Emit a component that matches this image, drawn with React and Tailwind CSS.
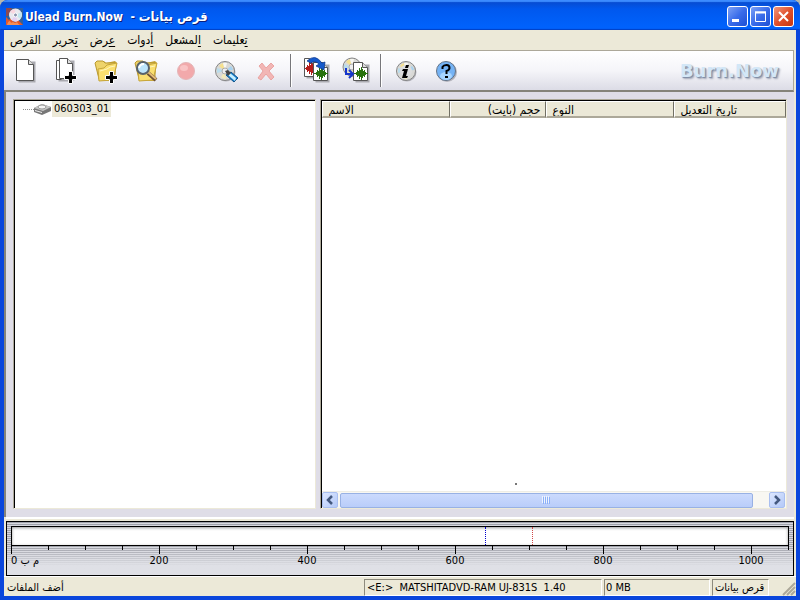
import React from "react";

const menus = [
  ["", "القرص"],
  ["ت", "حرير"],
  ["ع", "رض"],
  ["أ", "دوات"],
  ["ا", "لمشعل"],
  ["ت", "عليمات"],
];

function Plus() {
  return (
    <path d="M18.500 12.500h4v4h4v4h-4v4h-4v-4h-4v-4h4z" fill="#000" stroke="#fff" strokeWidth="1" />
  );
}

function Disc({ cx = 15, cy = 15, r = 10 }) {
  return (
    <g>
      <circle cx={cx + 1} cy={cy + 1} r={r} fill="#b4b4bc" />
      <circle cx={cx} cy={cy} r={r} fill="#d9d9d6" stroke="#858585" />
      <path d={`M${cx} ${cy}l-6 -5a8 8 0 0 1 4 -3z`} fill="#f5e08f" />
      <path d={`M${cx} ${cy}l-2 -8h4z`} fill="#f7f7f2" />
      <path d={`M${cx} ${cy}l-8 2v-5z`} fill="#b9dcec" />
      <path d={`M${cx} ${cy}l6 -5a8 8 0 0 1 2 4z`} fill="#a8d2ef" />
      <path d={`M${cx} ${cy}l-4 6a8 8 0 0 0 5 2z`} fill="#f3eab8" />
      <circle cx={cx} cy={cy} r="3" fill="#eee" stroke="#aaa" />
    </g>
  );
}

const waveHeights = [0, 0, 1, 3, 2, 5, 3, 6, 4, 2, 3, 1, 0, 0];

function Wave({ x, y, color, from = 0, to = 14 }) {
  return (
    <g fill={color} shapeRendering="crispEdges">
      {waveHeights.slice(from, to).map((h, i) => (
        <rect key={i} x={x + i} y={y - h} width="1" height={h * 2 + 1} />
      ))}
    </g>
  );
}

function Page({ x, y, w, h }) {
  return (
    <g>
      <path d={`M${x + 2} ${y + 2}h${w}v${h}h-${w}z`} fill="#aaaab0" />
      <path d={`M${x} ${y}h${w - 5}l5 5v${h - 5}h-${w}z`} fill="#fff" stroke="#555" />
      <path d={`M${x + w - 5} ${y}v5h5`} fill="#ddd" stroke="#555" />
    </g>
  );
}

function Folder() {
  return (
    <g>
      <path d="M5 7l2-2h6l2 2 9-2 2 2-3 18H8z" fill="#c6a337" />
      <path d="M4 7l2-2h6l2 2h10v16H8z" fill="#eed36a" stroke="#b9992f" />
      <path d="M7 13l6-1 3-3 10-2-4 17-14 1z" fill="#fadf70" stroke="#c7a63a" />
      <path d="M9 15l7-2 3-2 5-1" stroke="#fff6bd" fill="none" />
    </g>
  );
}

const icons = {
  new: <Page x={5.5} y={3.5} w={17} h={21} />,
  addFile: (
    <g>
      <Page x={5.5} y={4.5} w={13} h={19} />
      <Page x={8.5} y={2.5} w={13} h={20} />
      <g transform="translate(-1 3)"><Plus /></g>
    </g>
  ),
  addFolder: (
    <g>
      <Folder />
      <g transform="translate(0 3)"><Plus /></g>
    </g>
  ),
  search: (
    <g>
      <Folder />
      <path d="M17 17l8 7" stroke="#6e5134" strokeWidth="4" />
      <path d="M17 16l8 7" stroke="#e4bc78" strokeWidth="2" />
      <circle cx="12" cy="12" r="6" fill="#bde5fb" stroke="#58626c" strokeWidth="2" />
      <path d="M8 12q1-4 5-4" stroke="#fff" fill="none" strokeWidth="2" />
    </g>
  ),
  record: (
    <g>
      <circle cx="15" cy="15" r="8.500" fill="#f2a9ab" stroke="#e4b6b8" />
      <ellipse cx="13" cy="12" rx="4" ry="3" fill="#f9c4c5" />
    </g>
  ),
  erase: (
    <g>
      <Disc cx={14} cy={15} r={9.5} />
      <path d="M15 19l5-3 7 6-4 4z" fill="#1681cf" stroke="#135389" />
      <path d="M19 17l6 5-1 3-7-6z" fill="#c8efff" />
      <path d="M14 15l3-1 3 3-3 3z" fill="#444" />
    </g>
  ),
  delete: (
    <path d="M8 10l3-3 4 5 5-5 3 3-5 5 5 6-3 3-5-6-5 6-3-2 5-7z" fill="#f2b6b5" stroke="#e79896" strokeWidth=".8" />
  ),
  convert: (
    <g>
      <Page x={3.5} y={2.5} w={10} h={18} />
      <Wave x={4} y={12} color="#b51c1c" from={1} to={10} />
      <Page x={12.5} y={6.5} w={14} h={18} />
      <Wave x={13} y={17} color="#28720d" />
      <path d="M6 5q8-8 15 2l3-1-1 8-8-4 3-2q-4-4-8-1z" fill="#1559cb" stroke="#073489" strokeWidth=".7" />
    </g>
  ),
  extract: (
    <g>
      <Disc cx={11} cy={11} r={9} />
      <Page x={12.5} y={6.5} w={14} h={18} />
      <Wave x={13} y={17} color="#28720d" />
      <path d="M5 12v6h6M8 14l4 4-4 4" fill="none" stroke="#1736cc" strokeWidth="2" />
    </g>
  ),
  info: (
    <g>
      <Disc r={9.5} />
      <circle cx="15" cy="15" r="6" fill="#ddd" />
      <path d="M15 9h3l-1 3h-3zM12 13h5l-2 7h2l-1 2h-5l2-7h-2z" fill="#000" />
    </g>
  ),
  help: (
    <g>
      <circle cx="16" cy="16" r="10" fill="#b4b4bc" />
      <circle cx="15" cy="15" r="9.500" fill="#75b3f5" stroke="#647386" />
      <ellipse cx="15" cy="20" rx="6" ry="4" fill="#a7d5ff" />
      <path d="M11.500 13v-2q1-2 4-2t3 3q0 2-3 3v3" fill="none" stroke="#000" strokeWidth="2" />
      <path d="M14 20h3v2h-3z" />
    </g>
  ),
};

function Tool({ name, label }) {
  return (
    <button type="button" aria-label={label} className="flex w-10 items-center justify-center">
      <svg width="30" height="30" viewBox="0 0 30 30">{icons[name]}</svg>
    </button>
  );
}

function Divider() {
  return (
    <div className="flex w-[10px] justify-center py-[3px]">
      <div className="w-px bg-[#77777b]" />
      <div className="w-px bg-white" />
    </div>
  );
}

function Caption({ label, close, children }) {
  return (
    <button
      type="button"
      aria-label={label}
      className={
        "h-[21px] w-[21px] rounded-[3px] border border-white " +
        (close
          ? "bg-linear-to-br from-[#f0957a] via-[#e0502c] to-[#c5350d]"
          : "bg-linear-to-br from-[#7da0f5] via-[#3a6cea] to-[#1c4fd4]")
      }
    >
      <svg width="19" height="19" viewBox="0 0 19 19" fill="none" stroke="#fff">
        {children}
      </svg>
    </button>
  );
}

function ScrollButton({ label, d }) {
  return (
    <button type="button" aria-label={label} className="h-4 w-4 shrink-0 rounded-[2px] border border-[#a9bff0] bg-linear-to-br from-[#dce7ff] to-[#b4c9f8]">
      <svg width="14" height="14" viewBox="0 0 14 14" fill="none" stroke="#44597f" strokeWidth="2.500">
        <path d={d} />
      </svg>
    </button>
  );
}

const sunken = "border-t border-l border-[#8d8a7c] border-r-white border-b-white border-r border-b";

function Column({ children, width, end }) {
  return (
    <th
      scope="col"
      className={
        "h-[17px] overflow-hidden border-t border-r border-b-2 border-l border-t-white border-r-[#716f64] border-b-[#aca899] border-l-white bg-[#ebe8d7] p-0 px-[5px] font-normal whitespace-nowrap " +
        width + (end ? " text-right" : " text-left")
      }
    >
      <div className="h-[14px] pt-px leading-[14px]">{children}</div>
    </th>
  );
}

const ticks = Array.from({ length: 21 }, (_, i) => i * 50);

export default function App() {
  return (
    <div className="h-screen bg-[#b5b8ae] font-['DejaVu_Sans_Condensed','DejaVu_Sans',sans-serif] text-[11px] leading-[14px] text-black">
      <div className="flex h-full flex-col overflow-hidden rounded-t-[8px] bg-[#0a46dc]">
        <header className="flex h-[30px] shrink-0 items-center gap-[2px] bg-linear-to-b from-[#0848c8] from-0% via-[#0058ee] via-30% to-[#0062fc] to-90% px-[6px] pt-[3px] shadow-[inset_0_2px_1px_#3c8cff,inset_0_-1px_1px_#0141c5]">
          <svg width="17" height="17" viewBox="0 0 17 17" className="shrink-0">
            <rect width="17" height="17" fill="#315f9a" />
            <path d="M0 17V9l3 3 2-2 3 4 4-2 5 5z" fill="#e2582b" />
            <path d="M0 0h6L2 8H0z" fill="#8b4950" />
            <circle cx="9.500" cy="7" r="6.500" fill="#e9e9ef" />
            <path d="M9.500 7L4 4q2-3 5-3z" fill="#f8d6df" />
            <path d="M9.500 7l6-3q1 4-1 7z" fill="#c2e6ee" />
            <path d="M9.500 7l-4 5q4 3 6 1z" fill="#e3cff2" />
            <circle cx="9.500" cy="7" r="2" fill="#8a93ad" stroke="#fff" />
            <path d="M1 17q1-4 3-4 1 3 3 1 2 2 4 0 1 2 3 3z" fill="#f48e55" />
          </svg>
          <h1 className="flex-1 text-[13px] leading-4 font-bold whitespace-nowrap text-white [text-shadow:1px_1px_#0a1f7c]">
            <span className="text-[12px]">Ulead Burn.Now&nbsp; - </span>
            <bdi>قرص بيانات</bdi>
          </h1>
          <div className="flex gap-[2px]">
            <Caption label="Minimize"><path d="M4 13.500h7" strokeWidth="3" /></Caption>
            <Caption label="Maximize"><path d="M4.500 5.500h10v9h-10zM4 5h11" /><path d="M4 5.500h11" strokeWidth="2" /></Caption>
            <Caption label="Close" close><path d="M5 5l9 9M14 5l-9 9" strokeWidth="2" /></Caption>
          </div>
        </header>

        <div className="mx-1 mb-1 flex min-h-0 flex-1 flex-col bg-[#ece9d8]">
          <nav className="flex h-5 shrink-0 items-center gap-3 px-[6px]">
            {menus.map(([key, rest]) => (
              <button type="button" key={rest} dir="rtl" className="text-[12px] whitespace-nowrap">
                <span className="underline underline-offset-2">{key}</span>{rest}
              </button>
            ))}
          </nav>

          <div className="mr-[2px] flex h-[42px] shrink-0 border-t border-r border-b-2 border-t-[#aca899] border-r-[#aca899] border-b-[#85837a] bg-linear-to-b from-white via-[#f5f5f9] via-50% to-[#dcdce6] pl-[2px]">
            <Tool name="new" label="New" />
            <Tool name="addFile" label="Add files" />
            <Tool name="addFolder" label="Add folder" />
            <Tool name="search" label="Search" />
            <Tool name="record" label="Burn" />
            <Tool name="erase" label="Erase disc" />
            <Tool name="delete" label="Delete" />
            <Divider />
            <Tool name="convert" label="Convert" />
            <Tool name="extract" label="Extract audio" />
            <Divider />
            <Tool name="info" label="Information" />
            <Tool name="help" label="Help" />
            <div className="flex flex-1 items-center justify-end pr-[14px] font-['DejaVu_Sans',sans-serif] text-[18px] font-bold text-[#d3e7f7] [text-shadow:1px_1px_1px_#7d8ba5,2px_2px_2px_#a9adbb]">
              Burn.Now
            </div>
          </div>

          <main className="mr-[2px] flex min-h-0 flex-1 gap-1 border-l-2 border-[#85837a] bg-[#dfdde7] pt-[7px] pr-[7px] pb-2 pl-[7px]">
            <section className="flex w-[39.200%] border-t border-r border-b border-l border-t-[#aca899] border-r-[#ece9d8] border-b-[#ece9d8] border-l-[#aca899] bg-white">
              <div className="flex-1 border-t border-l border-black">
                <div className="flex items-center pl-2">
                  <div className="w-[11px] border-b border-dotted border-[#909090]" />
                  <svg width="17" height="14" viewBox="0 0 17 14">
                    <path d="M0 6l8-4 9 3v4l-9 4-8-3z" fill="#777" />
                    <path d="M0 6l8-4 9 3-8 4z" fill="#c6c6c6" />
                    <ellipse cx="8" cy="5" rx="4" ry="2" fill="#f4f4f4" stroke="#999" />
                    <path d="M1 8l7 2v1l-7-2z" fill="#eee" />
                  </svg>
                  <span className="ml-px h-4 bg-[#ece9d8] px-[2px] leading-4">060303_01</span>
                </div>
              </div>
            </section>

            <section className="flex min-w-0 flex-1 border-t border-r border-b border-l border-t-[#aca899] border-r-[#ece9d8] border-b-[#ece9d8] border-l-[#aca899] bg-white">
              <div className="flex min-w-0 flex-1 flex-col border-t border-l border-black">
                <table className="w-full table-fixed border-separate border-spacing-0 text-[12px]">
                  <thead>
                    <tr>
                      <Column width="w-[128px]">الاسم</Column>
                      <Column width="w-[96px]" end><bdi>حجم (بايت)</bdi></Column>
                      <Column width="w-[128px]">النوع</Column>
                      <Column width="w-auto"><bdi>تاريخ التعديل</bdi></Column>
                    </tr>
                  </thead>
                </table>
                <div className="relative flex-1">
                  <span className="absolute bottom-[6px] left-[41.500%] h-[2px] w-[2px] bg-[#777]" />
                </div>
                <div className="flex h-[17px] shrink-0 items-center border-t border-[#eeede5] bg-[#f8f7f2] pr-px">
                  <ScrollButton label="Scroll left" d="M9 3L5 7l4 4" />
                  <div className="flex flex-1 pr-4 pl-[2px]">
                    <div className="flex h-[15px] flex-1 items-center justify-center gap-px rounded-[2px] border border-[#98b1e4] bg-linear-to-b from-[#cbdafd] to-[#b9cdfa]">
                      {[0, 1, 2, 3].map((n) => (
                        <div key={n} className="h-[7px] w-px bg-[#8cb0f8] shadow-[-1px_-1px_#eef4fe]" />
                      ))}
                    </div>
                  </div>
                  <ScrollButton label="Scroll right" d="M5 3l4 4-4 4" />
                </div>
              </div>
            </section>
          </main>

          <section className="mr-[2px] ml-[2px] shrink-0 border-t-2 border-white pt-[2px]">
            <div className="h-[55px] border border-black bg-[repeating-linear-gradient(to_bottom,#a0a2aa_0_1px,#d8d9df_1px_2px)] px-1 pt-1">
              <div className="relative h-[20px] border border-black bg-white shadow-[inset_0_1px_3px_#999]">
                <span className="absolute inset-y-0 left-[61%] border-l border-dotted border-[#0000cc]" />
                <span className="absolute inset-y-0 left-[67%] border-l border-dotted border-[#d04848]" />
              </div>
              <div className="-mx-1 flex h-[29px] bg-linear-to-b from-[#dfdfe600] to-[#dfe0e6] to-70% px-1">
                {ticks.map((t) => (
                  <div key={t} className="flex min-w-0 flex-1 flex-col items-start">
                    <div className={t % 200 === 0 ? "h-[8px] w-px bg-black" : "h-[4px] w-px bg-black"} />
                    {t % 200 === 0 && (
                      <div className={t ? "flex w-0 justify-center" : "whitespace-nowrap"}>
                        {t ? t : <span>0 <bdi>م ب</bdi></span>}
                      </div>
                    )}
                  </div>
                ))}
                <div className="h-[4px] w-px bg-black" />
              </div>
            </div>
          </section>

          <footer className="flex h-5 shrink-0 gap-[2px] border-t border-white pt-[2px]">
            <div className="flex-1 pt-px pl-[3px] leading-4"><bdi>أضف الملفات</bdi></div>
            <div className={"w-[238px] pt-px pl-[2px] leading-[14px] whitespace-pre " + sunken}>{"<E:>  MATSHITADVD-RAM UJ-831S  1.40"}</div>
            <div className={"w-[106px] pt-px pl-px leading-[14px] " + sunken}>0 MB</div>
            <div className={"w-[57px] overflow-hidden pt-px pl-[2px] leading-[14px] whitespace-nowrap " + sunken}><bdi>قرص بيانات</bdi></div>
            <svg width="25" height="17" viewBox="0 0 25 17" stroke="#aca899" strokeWidth="2">
              <path d="M12 16L24 4M16 16l8-8M20 16l4-4" />
            </svg>
          </footer>
        </div>
      </div>
    </div>
  );
}
